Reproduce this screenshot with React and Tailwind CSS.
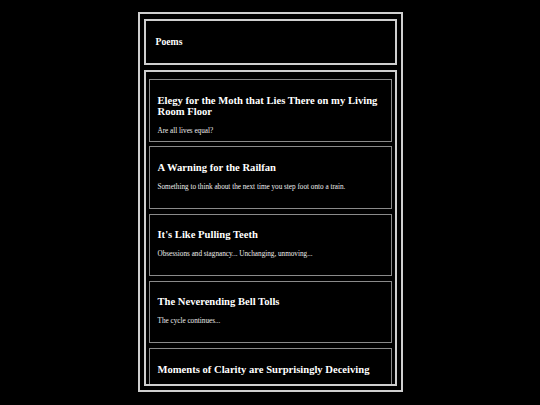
const poems = [
  { title: 'Elegy for the Moth that Lies There on my Living Room Floor', blurb: 'Are all lives equal?' },
  { title: 'A Warning for the Railfan', blurb: 'Something to think about the next time you step foot onto a train.' },
  { title: "It's Like Pulling Teeth", blurb: 'Obsessions and stagnancy... Unchanging, unmoving...' },
  { title: 'The Neverending Bell Tolls', blurb: 'The cycle continues...' },
  { title: 'Moments of Clarity are Surprisingly Deceiving' },
];

function PoemCard({ title, blurb }) {
  return (
    <div className="shrink-0 h-[62.5px] border border-[#8a8a8a] px-[8px] pt-[14.5px] overflow-hidden">
      <h2 className="text-[10.6px] font-bold leading-[1.11] text-white">{title}</h2>
      {blurb && <p className="mt-[9px] text-[7.2px] leading-[1.15] text-[#eeeeee]">{blurb}</p>}
    </div>
  );
}

export default function App() {
  return (
    <div className="min-h-[405px] bg-black pt-[12px] font-['Liberation_Serif','Times_New_Roman',serif]">
      <div className="mx-auto w-[265px] h-[380px] border-2 border-[#cfcfcf] px-[4px] pt-[5px] pb-[4px] flex flex-col gap-[5px]">
        {/* Header */}
        <div className="shrink-0 h-[46px] border-2 border-[#cfcfcf] px-[10px] flex items-center">
          <h1 className="text-[9.7px] font-bold text-white">Poems</h1>
        </div>

        {/* Poem list */}
        <div className="flex-1 min-h-0 overflow-hidden border-2 border-[#cfcfcf] px-[3px] pt-[7px] flex flex-col gap-[4.8px]">
          {poems.map((p) => (
            <PoemCard key={p.title} title={p.title} blurb={p.blurb} />
          ))}
        </div>
      </div>
    </div>
  );
}
